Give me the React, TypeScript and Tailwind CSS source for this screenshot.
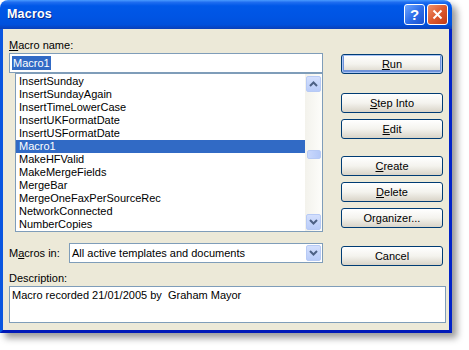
import React from "react";

const FONT = { fontFamily: '"Liberation Sans", Arial, sans-serif' };

const items = [
  "InsertSunday",
  "InsertSundayAgain",
  "InsertTimeLowerCase",
  "InsertUKFormatDate",
  "InsertUSFormatDate",
  "Macro1",
  "MakeHFValid",
  "MakeMergeFields",
  "MergeBar",
  "MergeOneFaxPerSourceRec",
  "NetworkConnected",
  "NumberCopies",
];

function Chevron({ up }: { up?: boolean }) {
  return (
    <svg width="9" height="6" viewBox="0 0 9 6">
      <polyline
        points={up ? "1,5 4.5,1.5 8,5" : "1,1 4.5,4.5 8,1"}
        fill="none"
        stroke="#4D6185"
        strokeWidth="2"
      />
    </svg>
  );
}

function ArrowBtn({ up, className }: { up?: boolean; className?: string }) {
  return (
    <div
      className={
        "flex items-center justify-center rounded-[2px] border border-[#B7CAF5] bg-gradient-to-b from-[#D4E0FD] to-[#B9CCF9] " +
        (className || "")
      }
    >
      <Chevron up={up} />
    </div>
  );
}

function XpButton({
  children,
  className,
  isDefault,
}: {
  children: React.ReactNode;
  className?: string;
  isDefault?: boolean;
}) {
  return (
    <div
      className={
        "h-[20px] w-[102px] rounded-[3px] border border-[#003C74] bg-gradient-to-b from-[#FFFFFF] via-[#F4F3EE] to-[#D9D4C8] flex items-center justify-center text-[11px] text-black " +
        (isDefault ? "shadow-[inset_0_0_0_1px_#A9C4F5,inset_0_-1px_0_2px_#6F93DA] " : "") +
        (className || "")
      }
    >
      {children}
    </div>
  );
}

export default function App() {
  return (
    <div className="w-[469px] h-[350px] bg-white overflow-hidden" style={FONT}>
      <div className="w-[452px] h-[333px] flex flex-col rounded-t-[8px] shadow-[5px_5px_7px_rgba(0,0,0,0.4)]">
        {/* Title bar */}
        <div className="h-[29px] rounded-t-[8px] flex items-center pl-[7px] pr-[4px] bg-[linear-gradient(to_bottom,#4A9BFF_0%,#1F6DF0_8%,#0058E8_20%,#0054E3_60%,#0050DC_85%,#0A3FB8_100%)]">
          <span className="text-white font-bold text-[12.5px] [text-shadow:1px_1px_0_#0A2A8A] tracking-[0.2px]">
            Macros
          </span>
          <div className="ml-auto flex gap-[2px]">
            <div className="w-[21px] h-[21px] rounded-[3px] border border-white bg-gradient-to-br from-[#6FA6FF] via-[#2F6FEA] to-[#1A50D0] flex items-center justify-center text-white font-bold text-[15px] leading-none">
              ?
            </div>
            <div className="w-[21px] h-[21px] rounded-[3px] border border-white bg-gradient-to-br from-[#F0916A] via-[#DC5A30] to-[#C23A14] flex items-center justify-center">
              <svg width="11" height="11" viewBox="0 0 11 11">
                <path d="M1.5 1.5 L9.5 9.5 M9.5 1.5 L1.5 9.5" stroke="white" strokeWidth="2" />
              </svg>
            </div>
          </div>
        </div>

        {/* Body */}
        <div className="flex-1 flex flex-col bg-[#ECE9D8] border-l-[3px] border-r-[3px] border-b-[3px] border-l-[#0A56E0] border-r-[#0022C8] border-b-[#0019B8]">
          <div className="h-[241px] flex">
            {/* Left column */}
            <div className="w-[320px] pl-[6px] pt-[8px] flex flex-col">
              <div className="h-[16px] leading-[16px] text-[11px] text-black">
                <span className="underline">M</span>acro name:
              </div>
              <div className="h-[20px] w-[314px] border border-[#7F9DB9] bg-white flex items-center pl-[2px]">
                <span className="bg-[#316AC5] text-white text-[11px] leading-[14px] px-[1px]">Macro1</span>
              </div>
              <div className="ml-[6px] w-[308px] h-[159px] border border-[#7F9DB9] bg-white flex">
                <div className="flex-1 pt-[1px] flex flex-col">
                  {items.map((it) => (
                    <div
                      key={it}
                      className={
                        "h-[13px] leading-[13px] pl-[3px] text-[11px] " +
                        (it === "Macro1" ? "bg-[#316AC5] text-white" : "text-black")
                      }
                    >
                      {it}
                    </div>
                  ))}
                </div>
                <div className="w-[17px] flex flex-col bg-gradient-to-r from-[#F3F2EC] to-[#FDFDFA]">
                  <ArrowBtn up className="w-[15px] h-[16px] ml-[1px] mt-[2px]" />
                  <div className="flex-1">
                    <div className="ml-[2px] mt-[58px] w-[14px] h-[9px] rounded-[2px] border border-[#B7CAF5] bg-gradient-to-r from-[#C9D8FC] to-[#B5C9F8]" />
                  </div>
                  <ArrowBtn className="w-[15px] h-[16px] ml-[1px] mb-[1px]" />
                </div>
              </div>
              <div className="mt-[11px] flex items-center h-[20px]">
                <div className="w-[60px] text-[11px] text-black">
                  M<span className="underline">a</span>cros in:
                </div>
                <div className="w-[254px] h-[20px] border border-[#7F9DB9] bg-white flex items-center pl-[2px]">
                  <span className="text-[11px] text-black flex-1">All active templates and documents</span>
                  <ArrowBtn className="w-[15px] h-[16px] mr-[1px]" />
                </div>
              </div>
            </div>

            {/* Right column */}
            <div className="ml-[18px] w-[102px] pt-[25px] flex flex-col">
              <XpButton isDefault>
                <span className="underline">R</span>un
              </XpButton>
              <XpButton className="mt-[19px]">
                <span className="underline">S</span>tep Into
              </XpButton>
              <XpButton className="mt-[6px]">
                <span className="underline">E</span>dit
              </XpButton>
              <XpButton className="mt-[17px]">
                <span className="underline">C</span>reate
              </XpButton>
              <XpButton className="mt-[6px]">
                <span className="underline">D</span>elete
              </XpButton>
              <XpButton className="mt-[6px]">Organizer...</XpButton>
              <XpButton className="mt-[18px]">Cancel</XpButton>
            </div>
          </div>

          {/* Description */}
          <div className="pl-[6px] pr-[3px] flex flex-col">
            <div className="h-[16px] leading-[16px] text-[11px] text-black">Description:</div>
            <div className="h-[37px] border border-[#7F9DB9] bg-white pl-[2px] pt-[2px] text-[11px] leading-[13px] text-black whitespace-pre">
              {"Macro recorded 21/01/2005 by  Graham Mayor"}
            </div>
          </div>
        </div>
      </div>
    </div>
  );
}
